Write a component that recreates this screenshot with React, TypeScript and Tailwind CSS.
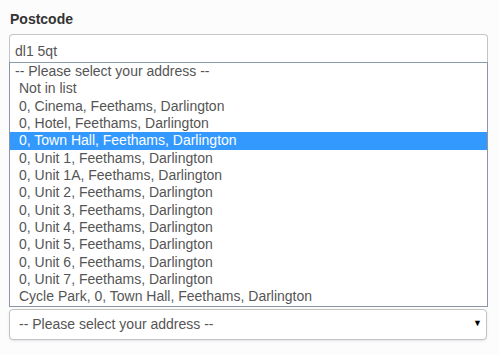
const addresses = [
  'Not in list',
  '0, Cinema, Feethams, Darlington',
  '0, Hotel, Feethams, Darlington',
  '0, Town Hall, Feethams, Darlington',
  '0, Unit 1, Feethams, Darlington',
  '0, Unit 1A, Feethams, Darlington',
  '0, Unit 2, Feethams, Darlington',
  '0, Unit 3, Feethams, Darlington',
  '0, Unit 4, Feethams, Darlington',
  '0, Unit 5, Feethams, Darlington',
  '0, Unit 6, Feethams, Darlington',
  '0, Unit 7, Feethams, Darlington',
  'Cycle Park, 0, Town Hall, Feethams, Darlington',
];

const selected = '0, Town Hall, Feethams, Darlington';

export default function App() {
  return (
    <div className="min-h-[355px] bg-[#fcfcfc] font-['Liberation_Sans',Arial,sans-serif] text-[14px]">
      <div className="w-[479px] ml-[9px] pt-[9px]">
        {/* Label */}
        <label className="block h-[20px] leading-[20px] mb-[5px] font-bold text-[#333] pl-px">
          Postcode
        </label>

        {/* Postcode input */}
        <div className="h-[28px] bg-white border border-b-0 border-[#c4c4c4] rounded-t-[4px] pl-[5px] pt-[6px] leading-[20px] text-[#555]">
          dl1 5qt
        </div>

        {/* Open dropdown list */}
        <ul className="bg-white border border-[#8c96a3] border-t-[#8a9bb0] text-[#555]">
          <li className="h-[17.33px] leading-[17.33px] pl-[5px]">-- Please select your address --</li>
          {addresses.map((a) => (
            <li
              key={a}
              className={`h-[17.33px] leading-[17.33px] pl-[9px] ${
                a === selected ? 'bg-[#3399ff] text-white' : ''
              }`}
            >
              {a}
            </li>
          ))}
        </ul>

        {/* Closed select */}
        <div className="mt-[2px] h-[31px] w-[478px] bg-white border border-[#c4c4c4] rounded-[4px] shadow-[0_1px_2px_rgba(60,90,130,0.15)] flex items-center justify-between pl-[9px] pr-[4px] text-[#555]">
          <span>-- Please select your address --</span>
          <span className="text-[9px] text-black">▼</span>
        </div>
      </div>
    </div>
  );
}
